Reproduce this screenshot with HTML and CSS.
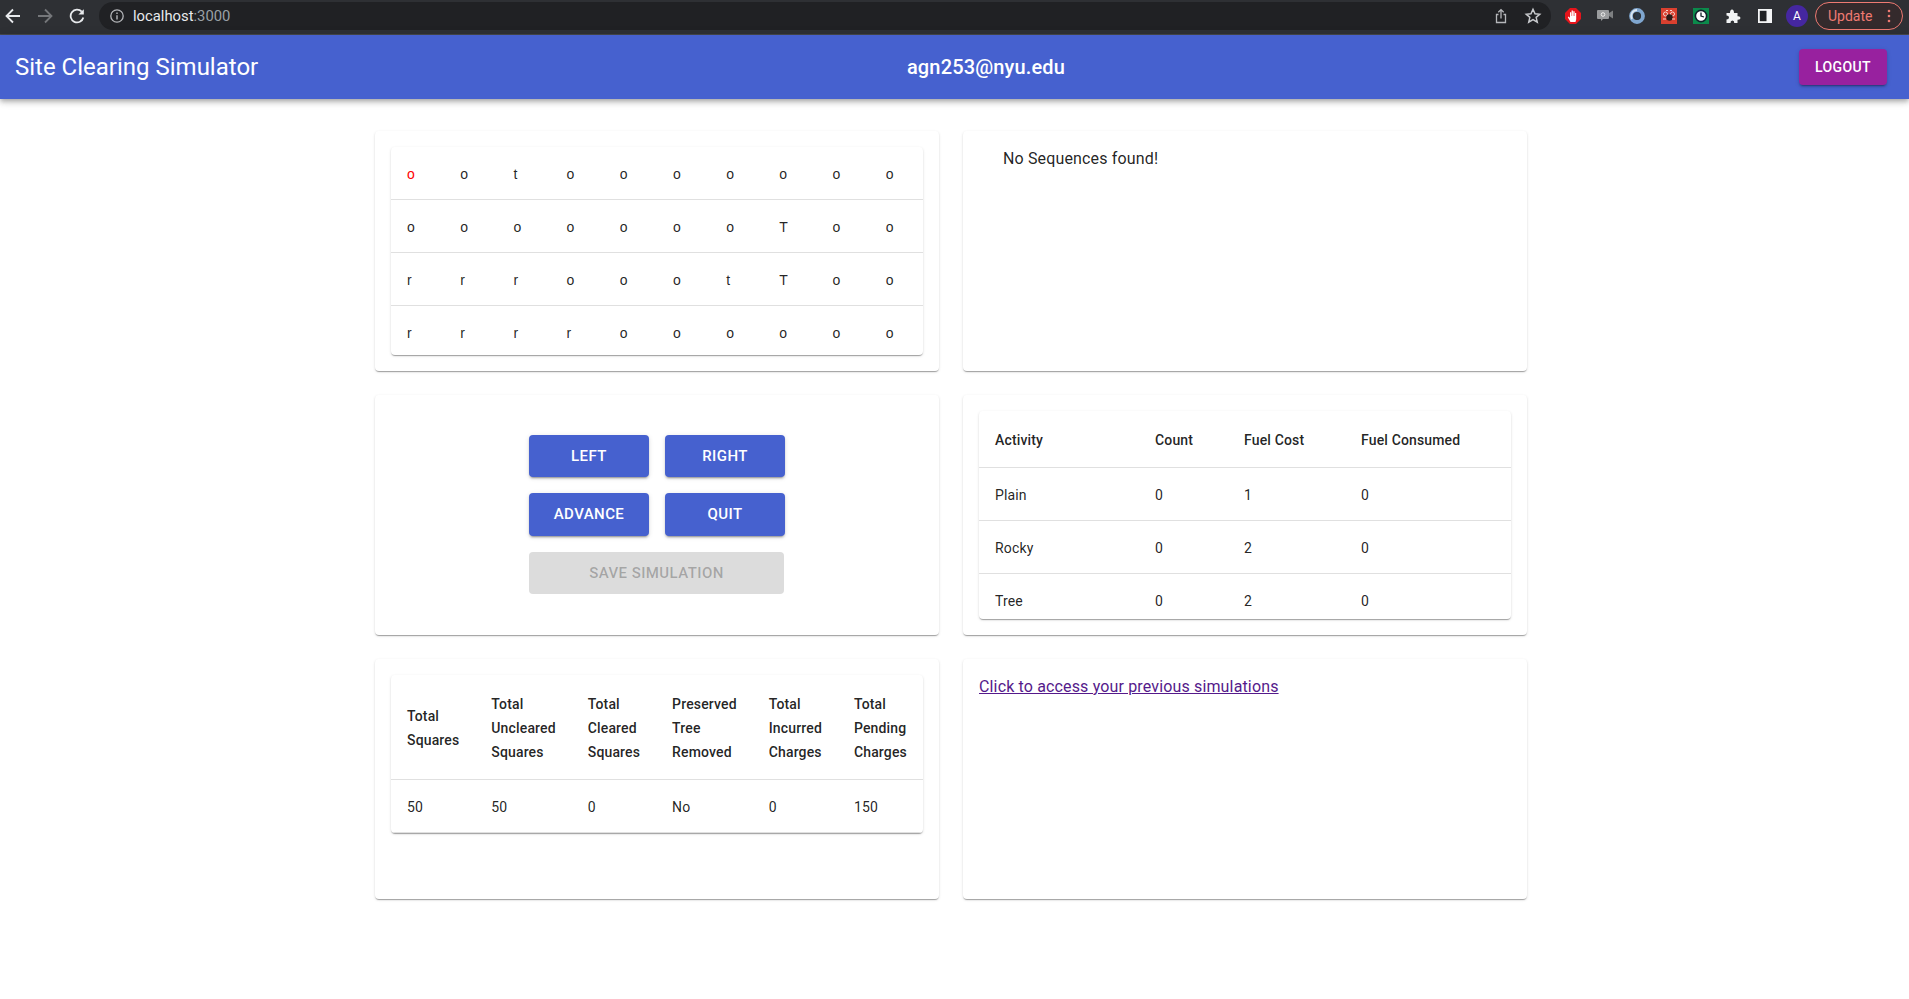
FILE: index.html
```html
<!DOCTYPE html>
<html lang="en">
<head>
<meta charset="utf-8">
<title>Site Clearing Simulator</title>
<link rel="stylesheet" href="styles.css">
</head>
<body>
<div class="chrome">
  <div class="nav">
    <svg class="ico" viewBox="0 0 16 16"><path d="M15 8H2M8 1.500 1.500 8 8 14.500" fill="none" stroke="#e8eaed" stroke-width="1.800"/></svg>
    <svg class="ico" viewBox="0 0 16 16"><path d="M1 8h13M8 1.500 14.500 8 8 14.500" fill="none" stroke="#75777a" stroke-width="1.800"/></svg>
    <svg class="ico" viewBox="0 0 16 16"><path d="M14.300 9.500A6.400 6.400 0 1 1 12.800 3.700" fill="none" stroke="#e8eaed" stroke-width="1.800"/><path d="M14.800 1.200v5.400H9.400z" fill="#e8eaed"/></svg>
  </div>
  <div class="omnibox">
    <svg class="info" viewBox="0 0 14 14"><circle cx="7" cy="7" r="6.200" fill="none" stroke="#b5b7ba" stroke-width="1.300"/><path d="M7 6.200v4.200M7 3.400v1.500" stroke="#b5b7ba" stroke-width="1.400"/></svg>
    <span class="host">localhost</span><span class="port">:3000</span>
    <span class="spacer"></span>
    <svg class="ico" viewBox="0 0 16 16"><path d="M5.500 6.500H3.500v8h9v-8h-2M8 10.500V2M5.300 4.300 8 1.600l2.700 2.700" fill="none" stroke="#b5b7ba" stroke-width="1.300"/></svg>
    <svg class="ico star" viewBox="0 0 16 16"><path d="m8 2 1.800 4 4.200.4-3.200 2.800 1 4.300L8 11.200l-3.800 2.300 1-4.300L2 6.400 6.200 6z" fill="none" stroke="#c8cacd" stroke-width="1.300"/></svg>
  </div>
  <div class="exts">
    <svg class="ext" viewBox="0 0 16 16"><path d="M5 0h6l5 5v6l-5 5H5l-5-5V5z" fill="#e5141b"/><path d="M5.500 14 2.800 9.300l1-.7L5 10V4.200h1.200V8h.4V2.600h1.300V8h.4V3.200h1.300V8h.4V5h1.200v6.200L10.500 14z" fill="#fff"/></svg>
    <svg class="ext" viewBox="0 0 16 16"><path d="M0 3q0-1 1-1h10q1 0 1 1v7q0 1-1 1H6l-2 2v-2H1q-1 0-1-1z" fill="#9a9c9e"/><path d="m12 5 4-2.500v8L12 8z" fill="#7d7f81"/><circle cx="6" cy="6.500" r="1.800" fill="none" stroke="#eee"/></svg>
    <svg class="ext" viewBox="0 0 16 16"><circle cx="8" cy="8" r="6" fill="none" stroke="#7fa6cf" stroke-width="3.800"/><path d="M8 2a6 6 0 0 0-5 9" fill="none" stroke="#dbe7f2" stroke-width="1.800"/><ellipse cx="8.500" cy="8" rx="2.400" ry="3.600" fill="#2b3a4a"/></svg>
    <svg class="ext" viewBox="0 0 16 16"><rect width="16" height="16" fill="#d9402f"/><circle cx="4.500" cy="6" r="2" fill="none" stroke="#f6d5d0"/><circle cx="11.500" cy="6" r="2" fill="none" stroke="#f6d5d0"/><circle cx="8.500" cy="9.500" r="3.200" fill="#2c1c1a"/><path d="M5 2.500h2M9 2.500h2M2 11h3M11 11h3" stroke="#f6d5d0"/></svg>
    <svg class="ext" viewBox="0 0 16 16"><rect width="16" height="16" fill="#0b8a4b"/><circle cx="8" cy="8" r="5.600" fill="#fff" stroke="#10202a" stroke-width="1.600"/><path d="M8 4.500V8l3 1" fill="none" stroke="#10202a" stroke-width="1.300"/></svg>
    <svg class="ext" viewBox="0 0 16 16"><path d="M1.500 5H5q0-3.500 2-3.500T9 5h3.500v3.300Q15.500 8 15.500 10t-3 1.800V15H9.200q.3-2.500-1.800-2.500T5.500 15H1.500v-3.500Q4 11.500 4 9.500T1.500 7.500z" fill="#f1f3f4"/></svg>
    <svg class="ext panel" viewBox="0 0 14 14"><rect width="14" height="14" fill="#f4f5f6"/><rect x="1.800" y="1.800" width="6.700" height="10.400" fill="#202124"/></svg>
    <span class="avatar">A</span>
    <span class="update">Update<svg class="dots" viewBox="0 0 4 14"><circle cx="2" cy="2" r="1.300"/><circle cx="2" cy="7" r="1.300"/><circle cx="2" cy="12" r="1.300"/></svg></span>
  </div>
</div>
<header class="appbar">
  <h1 class="brand">Site Clearing Simulator</h1>
  <div class="user">agn253@nyu.edu</div>
  <button class="logout">Logout</button>
</header>
<main class="grid">
  <section class="card">
    <div class="paper">
      <table class="board">
        <tr><td class="hot">o</td><td>o</td><td>t</td><td>o</td><td>o</td><td>o</td><td>o</td><td>o</td><td>o</td><td>o</td></tr>
        <tr><td>o</td><td>o</td><td>o</td><td>o</td><td>o</td><td>o</td><td>o</td><td>T</td><td>o</td><td>o</td></tr>
        <tr><td>r</td><td>r</td><td>r</td><td>o</td><td>o</td><td>o</td><td>t</td><td>T</td><td>o</td><td>o</td></tr>
        <tr><td>r</td><td>r</td><td>r</td><td>r</td><td>o</td><td>o</td><td>o</td><td>o</td><td>o</td><td>o</td></tr>
      </table>
    </div>
  </section>
  <section class="card">
    <p class="none">No Sequences found!</p>
  </section>
  <section class="card center">
    <div class="controls">
      <button class="btn">Left</button>
      <button class="btn">Right</button>
      <button class="btn">Advance</button>
      <button class="btn">Quit</button>
      <button class="btn save" disabled>Save Simulation</button>
    </div>
  </section>
  <section class="card">
    <div class="paper">
      <table class="data activity">
        <tr><th>Activity</th><th>Count</th><th>Fuel Cost</th><th>Fuel Consumed</th></tr>
        <tr><td>Plain</td><td>0</td><td>1</td><td>0</td></tr>
        <tr><td>Rocky</td><td>0</td><td>2</td><td>0</td></tr>
        <tr><td>Tree</td><td>0</td><td>2</td><td>0</td></tr>
      </table>
    </div>
  </section>
  <section class="card">
    <div class="paper">
      <table class="data totals">
        <tr><th>Total Squares</th><th>Total Uncleared Squares</th><th>Total Cleared Squares</th><th>Preserved Tree Removed</th><th>Total Incurred Charges</th><th>Total Pending Charges</th></tr>
        <tr><td>50</td><td>50</td><td>0</td><td>No</td><td>0</td><td>150</td></tr>
      </table>
    </div>
  </section>
  <section class="card">
    <a class="history" href="#">Click to access your previous simulations</a>
  </section>
</main>
</body>
</html>
```
FILE: styles.css
```css
* { box-sizing: border-box; }
html, body { margin: 0; background: #fff; }
body { font-family: Roboto, "Liberation Sans", sans-serif; color: rgba(0,0,0,.87); height: 999px; overflow: hidden; }

.chrome { height: 35px; background: #2e3034; display: flex; align-items: center; border-bottom: 1px solid #47494c; padding-bottom: 2px; }
.nav { display: flex; gap: 16px; padding-left: 5px; width: 99px; flex: none; }
.ico { width: 16px; height: 16px; flex: none; }
.star { width: 18px; height: 18px; margin-left: 15px; }
.omnibox { width: 1452px; height: 28px; background: #202124; border-radius: 14px; display: flex; align-items: center; padding: 0 9px 0 11px; font: 14.800px Roboto, sans-serif; flex: none; }
.info { width: 14px; height: 14px; margin-right: 9px; flex: none; }
.host { color: #e8eaed; }
.port { color: #9aa0a6; }
.spacer { flex: 1; }
.exts { display: flex; align-items: center; gap: 16px; padding-left: 14px; }
.ext { width: 16px; height: 16px; flex: none; }
.panel { width: 14px; height: 14px; margin-left: 1px; }
.avatar { width: 22px; height: 22px; border-radius: 50%; background: #4527a0; color: #fff; font: 12px/22px Roboto, sans-serif; text-align: center; flex: none; margin-left: -2px; }
.update { width: 88px; height: 28px; border: 1px solid #ee7a72; border-radius: 14px; background: #342a2c; color: #ee7a72; font: 14px/26px Roboto, sans-serif; display: flex; align-items: center; justify-content: space-between; padding: 0 11px 0 12px; margin-left: -9px; flex: none; }
.dots { width: 4px; height: 14px; fill: #ee7a72; }

.appbar { height: 64px; background: #4661cf; color: #fff; display: grid; grid-template-columns: 1fr auto 1fr; align-items: center; padding: 0 22px 0 15px; box-shadow: 0 2px 4px -1px rgba(0,0,0,.2), 0 4px 5px rgba(0,0,0,.14), 0 1px 10px rgba(0,0,0,.12); position: relative; }
.brand { margin: 0; font-size: 24px; font-weight: 400; line-height: 1.334; }
.user { font-size: 20px; font-weight: 500; letter-spacing: .0075em; margin-left: 70px; }
.logout { justify-self: end; width: 88px; height: 36px; background: #98219f; color: #fff; border: 0; border-radius: 4px; font: 500 14px Roboto, sans-serif; letter-spacing: .02857em; text-transform: uppercase; box-shadow: 0 3px 1px -2px rgba(0,0,0,.2), 0 2px 2px rgba(0,0,0,.14), 0 1px 5px rgba(0,0,0,.12); }

.grid { width: 1152px; margin: 32px 0 0 375px; display: grid; grid-template-columns: 564px 564px; grid-auto-rows: 240px; gap: 24px; }
.card { background: #fff; border-radius: 4px; padding: 16px; box-shadow: 0 2px 1px -1px rgba(0,0,0,.2), 0 1px 1px rgba(0,0,0,.14), 0 1px 3px rgba(0,0,0,.12); }
.paper { background: #fff; border-radius: 4px; max-height: 208px; box-shadow: 0 2px 1px -1px rgba(0,0,0,.2), 0 1px 1px rgba(0,0,0,.14), 0 1px 3px rgba(0,0,0,.12); overflow: hidden; }
table { width: 100%; border-collapse: collapse; font-size: 14px; line-height: 1.43; letter-spacing: .01071em; }
td, th { padding: 17px 16px 15px; text-align: left; border-bottom: 1px solid #e0e0e0; }
th { font-weight: 500; line-height: 24px; }
.board { font-family: "Liberation Sans", Arial, sans-serif; table-layout: fixed; }
.hot { color: #f00; }
.activity th:nth-child(1) { width: 160px; }
.activity th:nth-child(2) { width: 89px; }
.activity th:nth-child(3) { width: 117px; }
.none { margin: 0 0 0 24px; font-size: 16px; line-height: 24px; letter-spacing: .00938em; }
.center { display: flex; justify-content: center; align-items: flex-start; padding-top: 40px; }
.controls { display: grid; grid-template-columns: 120px 120px; gap: 16px; }
.btn { height: 42.250px; background: #4661cf; color: #fff; border: 0; border-radius: 4px; font: 500 15px Roboto, sans-serif; letter-spacing: .02857em; text-transform: uppercase; box-shadow: 0 3px 1px -2px rgba(0,0,0,.2), 0 2px 2px rgba(0,0,0,.14), 0 1px 5px rgba(0,0,0,.12); }
.save { grid-column: 1 / 3; background: #dcdcdc; color: rgba(0,0,0,.26); box-shadow: none; margin-right: 1px; }
.history { font-size: 16px; line-height: 24px; color: #551a8b; letter-spacing: .00938em; display: inline-block; }
```
